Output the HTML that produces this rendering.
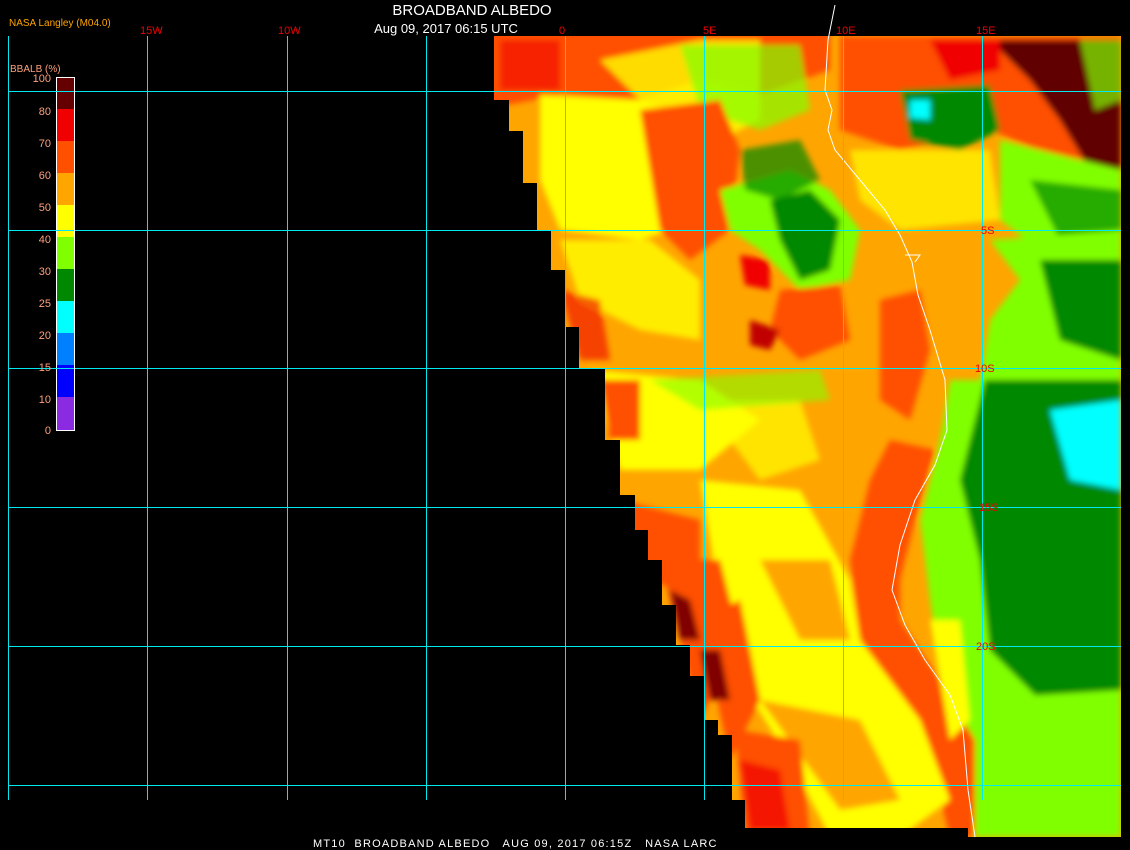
<!DOCTYPE html>
<html><head><meta charset="utf-8"><style>
html,body{margin:0;padding:0;background:#000;width:1130px;height:850px;overflow:hidden}
svg{display:block}
text{font-family:"Liberation Sans",sans-serif}
</style></head><body>
<svg width="1130" height="850" viewBox="0 0 1130 850" xmlns="http://www.w3.org/2000/svg">
<defs>
<clipPath id="data">
<polygon points="494,36 1121,36 1121,837 968,837 968,828 745,828 745,800 732,800 732,735 718,735 718,720 704,720 704,676 690,676 690,645 676,645 676,605 662,605 662,560 648,560 648,530 635,530 635,495 620,495 620,440 605,440 605,368 579,368 579,327 566,327 566,270 551,270 551,230 537,230 537,183 523,183 523,131 509,131 509,100 494,100"/>
</clipPath>
<filter id="bl"><feGaussianBlur stdDeviation="3"/></filter>
</defs>
<rect width="1130" height="850" fill="#000"/>
<g clip-path="url(#data)">
<rect x="480" y="30" width="660" height="820" fill="#ffa500"/>
<g filter="url(#bl)">
<!-- top band red-orange -->
<polygon points="480,30 830,30 830,70 760,95 700,80 640,100 560,95 480,110" fill="#ff5000"/>
<polygon points="500,40 560,40 560,90 500,90" fill="#f00000" opacity=".6"/>
<!-- upper yellow -->
<polygon points="540,95 640,100 700,120 700,220 640,240 560,230 540,180" fill="#ffff00"/>
<polygon points="600,60 700,40 760,40 760,120 700,150 650,110" fill="#ffff00" opacity=".8"/>
<polygon points="680,45 800,45 810,110 760,130 700,110" fill="#80ff00" opacity=".7"/>
<!-- red-orange inland blob -->
<polygon points="640,110 720,100 740,150 730,230 690,260 660,230 650,170" fill="#ff5000"/>
<!-- green patch -->
<polygon points="720,190 790,170 830,190 860,230 850,280 800,290 760,250 730,230" fill="#80ff00"/>
<polygon points="770,200 810,190 840,220 830,270 800,280 780,240" fill="#008800"/>
<polygon points="740,150 800,140 820,180 780,200 745,190" fill="#008800" opacity=".7"/>
<!-- top right -->
<polygon points="840,36 1121,36 1121,190 1060,160 990,130 900,150 840,130" fill="#ff5000"/>
<polygon points="990,40 1121,40 1121,170 1090,170 1060,120 1030,80" fill="#600000"/>
<polygon points="930,40 1000,40 1000,70 950,80" fill="#f00000"/>
<polygon points="900,90 990,85 1000,130 960,150 910,140" fill="#008800"/>
<polygon points="910,100 930,100 930,120 910,118" fill="#00ffff"/>
<polygon points="1080,40 1121,40 1121,100 1095,110" fill="#80ff00" opacity=".7"/>
<polygon points="1000,140 1121,170 1121,240 1040,250 1000,220" fill="#80ff00"/>
<polygon points="1030,180 1121,190 1121,230 1060,240" fill="#008800" opacity=".7"/>
<!-- mid yellow strip -->
<polygon points="850,150 990,150 1000,220 900,230 860,200" fill="#ffff00" opacity=".7"/>
<!-- right light green region -->
<polygon points="990,240 1121,230 1121,380 980,380 990,320 1020,280" fill="#80ff00"/>
<polygon points="1040,260 1121,260 1121,360 1060,340" fill="#008800"/>
<polygon points="950,380 1121,380 1121,837 960,837 945,700 930,600 920,520 940,440" fill="#80ff00"/>
<polygon points="985,380 1121,380 1121,690 1060,720 990,650 980,560 960,480 975,420" fill="#008800"/>
<polygon points="1050,410 1121,400 1121,490 1070,480" fill="#00ffff"/>
<polygon points="960,700 1121,690 1121,837 990,837" fill="#80ff00"/>
<!-- central red-orange patches -->
<polygon points="780,290 840,285 850,340 800,360 770,330" fill="#ff5000"/>
<polygon points="880,300 920,290 930,350 910,420 880,400" fill="#ff5000"/>
<polygon points="740,255 770,260 770,290 745,285" fill="#f00000"/>
<polygon points="750,320 780,330 770,350 750,345" fill="#c00000"/>
<!-- left yellow bands -->
<polygon points="560,240 650,240 700,280 700,340 640,330 580,300" fill="#ffff00" opacity=".8"/>
<polygon points="590,370 700,380 760,420 700,470 620,470" fill="#ffff00"/>
<polygon points="700,400 800,400 820,460 760,480" fill="#ffff00" opacity=".7"/>
<polygon points="650,380 820,370 830,400 700,410" fill="#80ff00" opacity=".6"/>
<!-- coastal red-orange band -->
<polygon points="890,440 935,450 915,520 900,580 900,620 940,680 975,740 975,837 950,837 930,760 900,700 860,640 850,560 870,480" fill="#ff5000"/>
<!-- yellow band lower -->
<polygon points="700,480 800,490 850,580 860,640 920,720 950,800 900,837 830,837 790,760 740,680 720,600" fill="#ffff00"/>
<polygon points="760,560 830,560 850,640 800,640" fill="#ffa500"/>
<polygon points="760,700 860,720 900,800 840,810" fill="#ffa500"/>
<polygon points="930,620 960,620 970,720 950,740" fill="#ffff00"/>
<!-- lower-left red / dark -->
<polygon points="620,500 700,520 700,600 650,580" fill="#ff5000"/>
<polygon points="660,560 720,560 740,640 700,720 680,640" fill="#ff5000"/>
<polygon points="700,620 740,600 760,700 730,760" fill="#ff5000"/>
<polygon points="735,730 800,740 810,837 745,837" fill="#ff5000"/>
<polygon points="740,760 780,770 790,830 750,830" fill="#f00000" opacity=".7"/>
<polygon points="670,590 690,600 700,640 680,640" fill="#800000"/>
<polygon points="700,650 720,650 730,700 710,700" fill="#800000"/>
<polygon points="600,380 640,380 640,440 610,440" fill="#ff5000"/>
<polygon points="560,290 600,300 610,360 580,360" fill="#f00000" opacity=".6"/>
</g>
</g>
<!-- coastline -->
<polyline points="835,5 828,40 825,90 832,110 828,130 835,150 860,180 885,210 900,235 912,262 918,295 930,330 945,380 947,430 935,465 915,500 900,545 892,590 905,625 925,660 950,695 963,730 968,790 975,837" fill="none" stroke="#fff" stroke-width="1"/>
<polyline points="905,255 920,255 915,262" fill="none" stroke="#fff" stroke-width="1"/>
<!-- grid -->
<g stroke="#00e8f0" stroke-width="1" shape-rendering="crispEdges">
<line x1="8.5" y1="36" x2="8.5" y2="800"/>
<line x1="147.5" y1="36" x2="147.5" y2="800"/>
<line x1="287.5" y1="36" x2="287.5" y2="800"/>
<line x1="426.5" y1="36" x2="426.5" y2="800"/>
<line x1="565.5" y1="36" x2="565.5" y2="800"/>
<line x1="704.5" y1="36" x2="704.5" y2="800"/>
<line x1="843.5" y1="36" x2="843.5" y2="800"/>
<line x1="982.5" y1="36" x2="982.5" y2="800"/>
<line x1="8" y1="91.5" x2="1121" y2="91.5"/>
<line x1="8" y1="230.5" x2="1121" y2="230.5"/>
<line x1="8" y1="368.5" x2="1121" y2="368.5"/>
<line x1="8" y1="507.5" x2="1121" y2="507.5"/>
<line x1="8" y1="646.5" x2="1121" y2="646.5"/>
<line x1="8" y1="785.5" x2="1121" y2="785.5"/>
</g>
<!-- grid labels -->
<g fill="#f00000" font-size="11">
<text x="140" y="34">15W</text>
<text x="278" y="34">10W</text>
<text x="559" y="34">0</text>
<text x="703" y="34">5E</text>
<text x="836" y="34">10E</text>
<text x="976" y="34">15E</text>
<text x="981" y="234">5S</text>
<text x="975" y="372">10S</text>
<text x="979" y="511">15S</text>
<text x="976" y="650">20S</text>
</g>
<!-- titles -->
<text x="472" y="15" fill="#fff" font-size="15" text-anchor="middle">BROADBAND ALBEDO</text>
<text x="446" y="33" fill="#fff" font-size="13" text-anchor="middle">Aug 09, 2017 06:15 UTC</text>
<text x="9" y="26" fill="#ffa500" font-size="10">NASA Langley (M04.0)</text>
<!-- legend -->
<text x="10" y="72" fill="#ffa07a" font-size="10">BBALB (%)</text>
<g>
<rect x="56" y="77" width="18" height="32" fill="#640000"/>
<rect x="56" y="109" width="18" height="32" fill="#f00000"/>
<rect x="56" y="141" width="18" height="32" fill="#ff5000"/>
<rect x="56" y="173" width="18" height="32" fill="#ffa500"/>
<rect x="56" y="205" width="18" height="32" fill="#ffff00"/>
<rect x="56" y="237" width="18" height="32" fill="#80ff00"/>
<rect x="56" y="269" width="18" height="32" fill="#008800"/>
<rect x="56" y="301" width="18" height="32" fill="#00ffff"/>
<rect x="56" y="333" width="18" height="32" fill="#0080ff"/>
<rect x="56" y="365" width="18" height="32" fill="#0000ff"/>
<rect x="56" y="397" width="18" height="33" fill="#8a2be2"/>
<rect x="56.5" y="77.5" width="18" height="353" fill="none" stroke="#fff" stroke-width="1"/>
<line x1="8" y1="91.5" x2="74" y2="91.5" stroke="#00e8f0"/>
<line x1="8" y1="230.5" x2="74" y2="230.5" stroke="#00e8f0"/>
<line x1="8" y1="368.5" x2="74" y2="368.5" stroke="#00e8f0"/>
</g>
<g fill="#ffa07a" font-size="11" text-anchor="end">
<text x="51" y="82">100</text>
<text x="51" y="115">80</text>
<text x="51" y="147">70</text>
<text x="51" y="179">60</text>
<text x="51" y="211">50</text>
<text x="51" y="243">40</text>
<text x="51" y="275">30</text>
<text x="51" y="307">25</text>
<text x="51" y="339">20</text>
<text x="51" y="371">15</text>
<text x="51" y="403">10</text>
<text x="51" y="434">0</text>
</g>
<text x="313" y="847" fill="#fff" font-size="11" font-family="Liberation Mono, monospace" letter-spacing="1.2" xml:space="preserve">MT10  BROADBAND ALBEDO   AUG 09, 2017 06:15Z   NASA LARC</text>
</svg>
</body></html>
